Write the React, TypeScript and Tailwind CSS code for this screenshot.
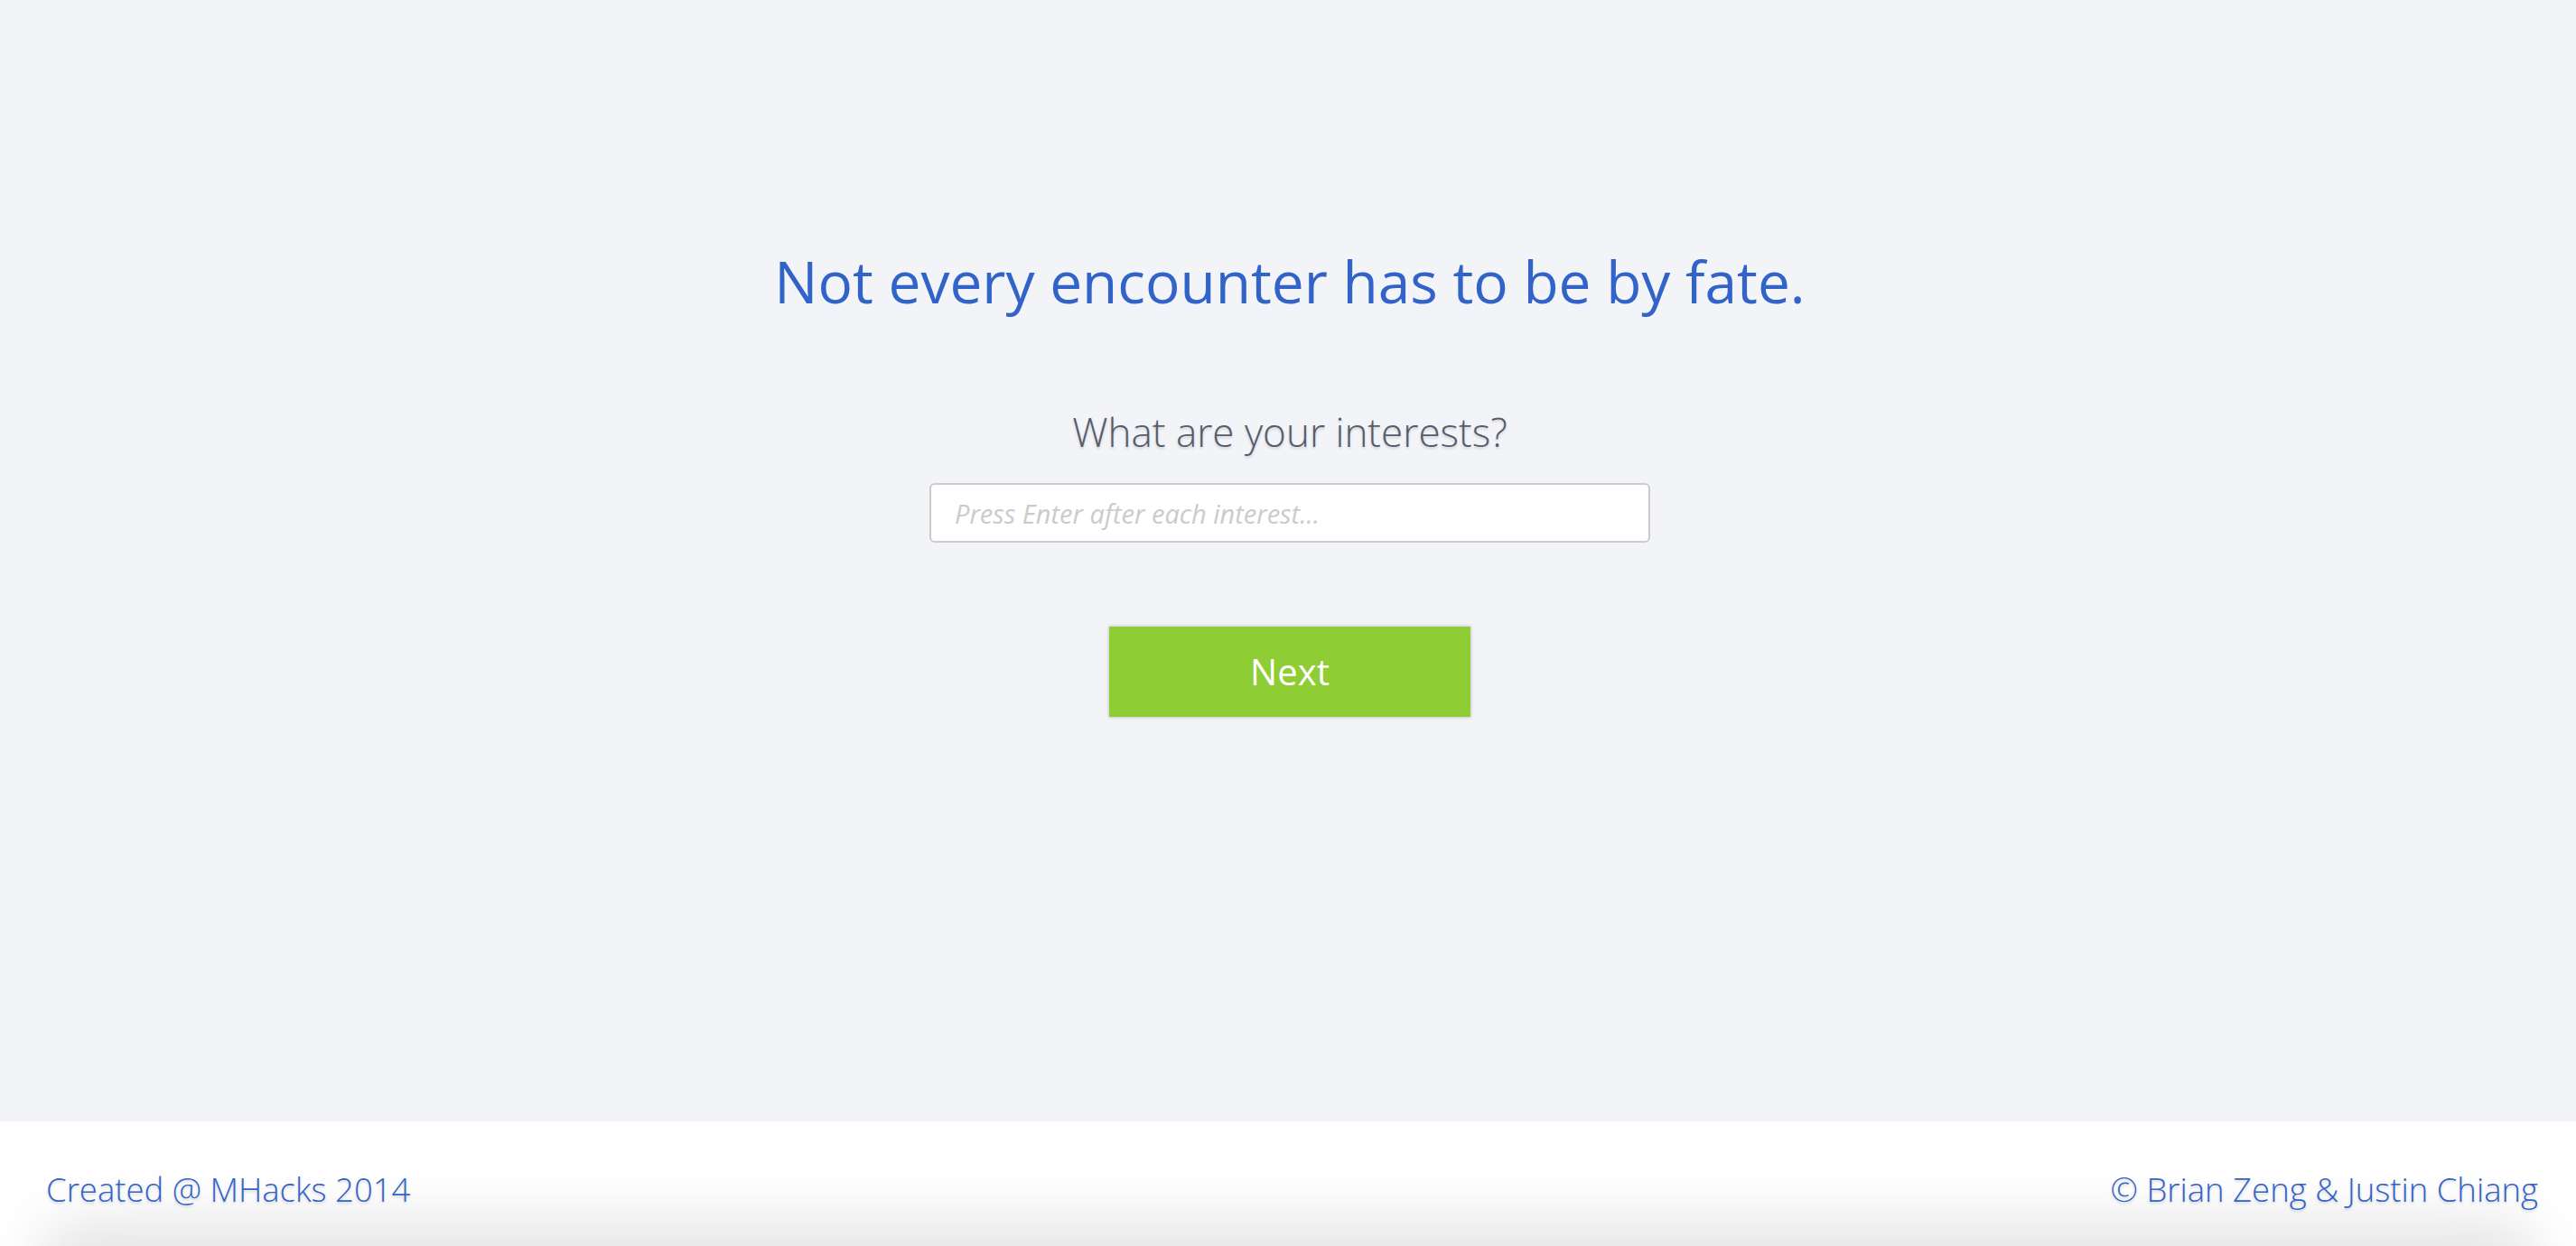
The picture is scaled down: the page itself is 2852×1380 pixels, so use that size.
import { useState } from 'react'

export default function App() {
  const [interest, setInterest] = useState('')

  return (
    <div className="flex min-h-screen flex-col bg-[#f3f4f8] font-['Open_Sans',sans-serif]">
      <main className="flex h-[1242px] flex-col items-center pt-[274px] pl-[4px]">
        <h1 className="text-[64px] leading-[76px] font-normal text-[#3263c9]">
          Not every encounter has to be by fate.
        </h1>

        <h2 className="mt-[102px] text-[44px] leading-[52px] font-light text-[#555d6b] [text-shadow:0_2px_3px_rgba(0,0,0,0.15)]">
          What are your interests?
        </h2>

        <input
          value={interest}
          onChange={(e) => setInterest(e.target.value)}
          placeholder="Press Enter after each interest..."
          className="mt-[31px] h-[66px] w-[798px] rounded-[6px] border-2 border-[#cccccc] bg-white px-[26px] text-[29px] text-[#444] outline-none placeholder:italic placeholder:text-[#cbcbcb]"
        />

        <button className="mt-[93px] h-[100px] w-[400px] bg-[#8ecd33] text-[40px] text-white shadow-[0_0_4px_rgba(0,0,0,0.25)]">
          Next
        </button>
      </main>

      <footer className="relative h-[138px] overflow-hidden bg-white">
        <div className="absolute right-[40px] bottom-[-70px] left-[40px] h-[100px] rounded-[80px] bg-[#e6e6e6] blur-[30px]" />
        <div className="relative flex justify-between pt-[53px] pr-[42px] pl-[51px] text-[36.5px] leading-[44px] font-light text-[#3263c9] [text-shadow:0_2px_3px_rgba(0,0,0,0.15)]">
          <span>Created @ MHacks 2014</span>
          <span>© Brian Zeng &amp; Justin Chiang</span>
        </div>
      </footer>
    </div>
  )
}
